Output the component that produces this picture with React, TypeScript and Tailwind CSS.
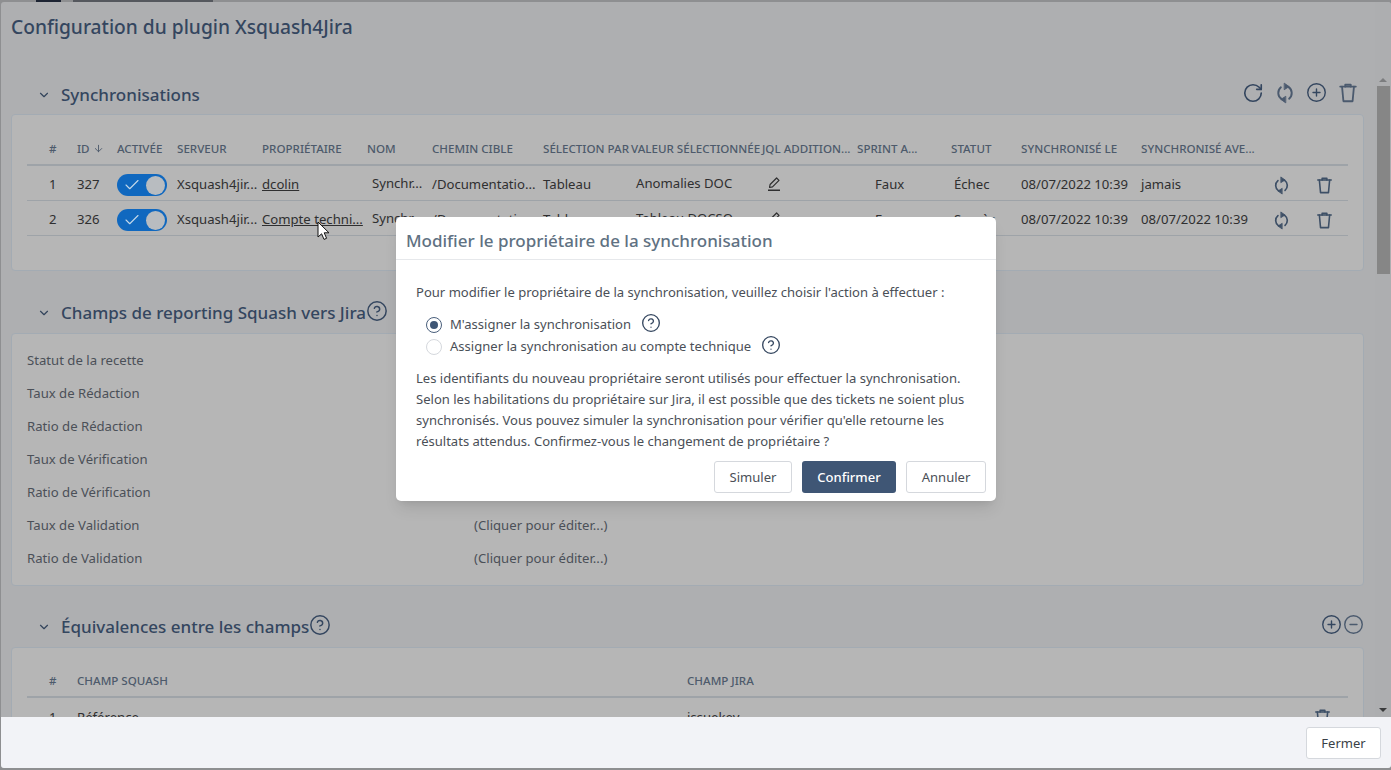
import React from 'react';
import { ChevronDown, ArrowDown, Check, RotateCw, CirclePlus, CircleMinus, CircleHelp } from 'lucide-react';

const FONT = { fontFamily: '"Noto Sans", sans-serif' };

const SyncIcon = ({ size = 20 }: { size?: number }) => (
  <svg width={size} height={size} viewBox="0 0 24 24" fill="none" stroke="currentColor" strokeWidth="2.1" strokeLinecap="round" strokeLinejoin="round">
    <path d="M16 5.6A8 8 0 0 1 16.5 18.2" />
    <path d="M8 18.4A8 8 0 0 1 7.5 5.8" />
    <path d="M11.5 1.5L16.5 5l-5 3.2z" fill="currentColor" strokeWidth="1" />
    <path d="M12.5 22.5L7.5 19l5-3.2z" fill="currentColor" strokeWidth="1" />
  </svg>
);

const BinIcon = ({ size = 20 }: { size?: number }) => (
  <svg width={size} height={size} viewBox="0 0 24 24" fill="none" stroke="currentColor" strokeWidth="2" strokeLinecap="round" strokeLinejoin="round">
    <path d="M3.5 5h17" />
    <path d="M9 5V3h6v2" />
    <path d="M5.5 5l1.5 16h10l1.5-16" />
  </svg>
);

const PenIcon = () => (
  <svg width="16" height="16" viewBox="0 0 16 16" fill="none" stroke="#2f2f30" strokeWidth="1.2" strokeLinejoin="round">
    <path d="M3.5 11.5l.6-3L10.6 2l2.4 2.4-6.5 6.5z" />
    <path d="M2 14.2h12" strokeWidth="1.5" />
  </svg>
);

const Toggle = () => (
  <div className="w-[50px] h-[22px] rounded-full bg-[#1068bf] flex items-center justify-between pl-[6px] pr-[2px]">
    <Check size={18} strokeWidth={1.5} className="text-[#c4d8ea]" />
    <div className="w-[19px] h-[19px] rounded-full bg-[#b8bcc0]" />
  </div>
);

const COLS = 'grid grid-cols-[50px_40px_60px_85px_105px_65px_111px_88px_131px_95px_94px_70px_120px_120px_44px_1fr]';

const Row = ({ n, id, owner, name, path, sel, value, status, last }: { n: string; id: string; owner: string; name: string; path: string; sel: string; value: string; status: string; last: string }) => (
  <div className={`${COLS} h-[35px] pt-[4px] items-center border-b border-[#9ea3a8] text-[13.15px] text-[#2f2f30]`}>
    <span className="pl-[22px]">{n}</span>
    <span>{id}</span>
    <Toggle />
    <span>Xsquash4jir...</span>
    <span className="underline">{owner}</span>
    <span className="pl-[5px] -mt-[2px]">{name}</span>
    <span>{path}</span>
    <span>{sel}</span>
    <span className="pl-[5px] -mt-[2px]">{value}</span>
    <span className="pl-[4px] -mt-[2px]"><PenIcon /></span>
    <span className="pl-[18px]">Faux</span>
    <span className="pl-[3px]">{status}</span>
    <span>08/07/2022 10:39</span>
    <span>{last}</span>
    <span className="pl-[11px] text-[#3d4f66]"><SyncIcon size={19} /></span>
    <span className="pl-[10px] text-[#3d4f66]"><BinIcon size={19} /></span>
  </div>
);

const SectionTitle = ({ title, help, first, children }: { title: string; help?: boolean; first?: boolean; children?: React.ReactNode }) => (
  <div className={`flex items-center h-[40px] pl-[36px] pr-[15px] ${first ? 'pt-[2px]' : ''}`}>
    <ChevronDown size={14} className="text-[#33445c]" />
    <span className="ml-[10px] text-[17px] font-medium text-[#34465f]">{title}</span>
    {help && <CircleHelp size={22} strokeWidth={1.6} className="text-[#34465f] -mt-[4px]" />}
    <div className="flex-1" />
    {children}
  </div>
);

const FIELDS = ['Statut de la recette', 'Taux de Rédaction', 'Ratio de Rédaction', 'Taux de Vérification', 'Ratio de Vérification', 'Taux de Validation', 'Ratio de Validation'];

const HEADERS = ['#', 'ID', 'ACTIVÉE', 'SERVEUR', 'PROPRIÉTAIRE', 'NOM', 'CHEMIN CIBLE', 'SÉLECTION PAR', 'VALEUR SÉLECTIONNÉE', 'JQL ADDITION...', 'SPRINT A...', 'STATUT', 'SYNCHRONISÉ LE', 'SYNCHRONISÉ AVE...'];

export default function App() {
  return (
    <div style={FONT} className="relative h-[770px] w-[1391px] overflow-hidden bg-[#8e8f91] pt-[2px] pb-[2px] pl-[1px]">
      {/* what is left of the page behind the drawer */}
      <div className="absolute left-0 top-0 flex h-[2px] w-full">
        <div className="ml-[36px] w-[25px] bg-[#1d2433]" />
        <div className="ml-[12px] w-[140px] bg-[#55585e]" />
      </div>

      <div className="relative flex h-full flex-col rounded-[3px] overflow-hidden bg-[#aeafb1]">
        <div className="flex flex-1 min-h-0">
          <div className="flex-1 min-w-0 overflow-hidden">
            <h1 className="pl-[10px] pt-[11px] h-[72px] text-[19.2px] font-medium text-[#34465f]">Configuration du plugin Xsquash4Jira</h1>

            <SectionTitle title="Synchronisations" first>
              <div className="-mt-[5px] mr-[1px] flex items-center gap-[10px] text-[#34465f]">
                <RotateCw size={22} strokeWidth={1.8} />
                <span className="text-[#4b5a6e]"><SyncIcon size={22} /></span>
                <CirclePlus size={21} strokeWidth={1.6} />
                <span className="text-[#4b5a6e]"><BinIcon size={22} /></span>
              </div>
            </SectionTitle>
            <div className="ml-[10px] mr-[11px] h-[157px] rounded-[4px] border border-[#a3abb3] bg-[#b6b6b6] px-[15px] pt-[18px]">
              <div className={`${COLS} h-[33px] items-center border-b-2 border-[#9ea3a8] text-[11.6px] font-medium text-[#4d5a6b] whitespace-nowrap`}>
                {HEADERS.map((h, i) => (
                  <span key={h} className={i === 0 ? 'pl-[22px]' : 'flex items-center gap-[3px]'}>
                    {h}
                    {h === 'ID' && <ArrowDown size={11} />}
                  </span>
                ))}
              </div>
              <Row n="1" id="327" owner="dcolin" name="Synchr..." path="/Documentatio..." sel="Tableau" value="Anomalies DOC" status="Échec" last="jamais" />
              <Row n="2" id="326" owner="Compte techni..." name="Synchr..." path="/Documentatio..." sel="Tableau" value="Tableau DOCSQ" status="Succès" last="08/07/2022 10:39" />
            </div>

            <div className="mt-[22px]">
              <SectionTitle title="Champs de reporting Squash vers Jira" help />
            </div>
            <div className="ml-[10px] mr-[11px] h-[253px] rounded-[4px] border border-[#a3abb3] bg-[#b6b6b6] px-[15px] pt-[10px]">
              {FIELDS.map(f => (
                <div key={f} className="flex h-[33px] items-center text-[13.15px] text-[#4b5058]">
                  <span className="w-[447px]">{f}</span>
                  <span>(Cliquer pour éditer...)</span>
                </div>
              ))}
            </div>

            <div className="mt-[21px]">
              <SectionTitle title="Équivalences entre les champs" help>
                <div className="-mr-[4px] -mt-[5px] flex items-center gap-[1px] text-[#34465f]">
                  <CirclePlus size={21} strokeWidth={1.6} />
                  <span className="text-[#4b5a6e]"><CircleMinus size={21} strokeWidth={1.6} /></span>
                </div>
              </SectionTitle>
            </div>
            <div className="ml-[10px] mr-[11px] h-[200px] rounded-[4px] border border-[#a3abb3] bg-[#b6b6b6] px-[15px] pt-[17px]">
              <div className="flex h-[33px] items-center border-b-2 border-[#9ea3a8] text-[11.6px] font-medium text-[#4d5a6b]">
                <span className="w-[50px] pl-[22px]">#</span>
                <span className="w-[610px]">CHAMP SQUASH</span>
                <span>CHAMP JIRA</span>
              </div>
              <div className="flex h-[35px] pt-[4px] items-center text-[13.15px] text-[#2f2f30]">
                <span className="w-[50px] pl-[22px]">1</span>
                <span className="w-[610px]">Référence</span>
                <span className="flex-1">issuekey</span>
                <span className="pr-[16px] text-[#3d4f66]"><BinIcon size={19} /></span>
              </div>
            </div>
          </div>

          <div className="w-[16px] shrink-0 pt-[76px] pb-[5px] flex flex-col items-center bg-[#adaeb0]">
            <div className="h-0 w-0 border-x-[4px] border-b-[4px] border-x-transparent border-b-[#7c7d7f]" />
            <div className="mt-[4px] h-[188px] w-[13px] bg-[#868686]" />
            <div className="flex-1" />
            <div className="h-0 w-0 border-x-[4px] border-t-[4px] border-x-transparent border-t-[#3a3b3c]" />
          </div>
        </div>

        <div className="flex h-[51px] shrink-0 items-center justify-end bg-[#f2f3f7] pr-[10px]">
          <button className="h-[32px] w-[75px] rounded-[3px] border border-[#d5d8dd] bg-white pt-[3px] text-[13px] text-[#3a3f47]">Fermer</button>
        </div>
      </div>

      {/* modal */}
      <div className="absolute left-[396px] top-[217px] w-[600px] h-[284px] rounded-[5px] bg-white shadow-lg text-[13.05px] text-[#4a4f57]">
        <div className="h-[43px] border-b border-[#e6e8eb] pl-[10px] pt-[11px] text-[17px] font-medium text-[#607182]">Modifier le propriétaire de la synchronisation</div>
        <div className="px-[20px] pt-[23px]">
          <p>Pour modifier le propriétaire de la synchronisation, veuillez choisir l'action à effectuer :</p>
          <div className="mt-[11px] pl-[10px]">
            <div className="flex h-[22px] items-center">
              <span className="flex h-[16px] w-[16px] items-center justify-center rounded-full border border-[#4a5f7c]"><span className="h-[8px] w-[8px] rounded-full bg-[#3f5675]" /></span>
              <span className="ml-[8px]">M'assigner la synchronisation</span>
              <CircleHelp size={20} strokeWidth={1.6} className="ml-[10px] -mt-[3px] text-[#34465f]" />
            </div>
            <div className="flex h-[22px] items-center">
              <span className="h-[16px] w-[16px] rounded-full border border-[#d5d8dd]" />
              <span className="ml-[8px]">Assigner la synchronisation au compte technique</span>
              <CircleHelp size={20} strokeWidth={1.6} className="ml-[10px] -mt-[3px] text-[#34465f]" />
            </div>
          </div>
          <p className="mt-[10px] leading-[21px]">Les identifiants du nouveau propriétaire seront utilisés pour effectuer la synchronisation. Selon les habilitations du propriétaire sur Jira, il est possible que des tickets ne soient plus synchronisés. Vous pouvez simuler la synchronisation pour vérifier qu'elle retourne les résultats attendus. Confirmez-vous le changement de propriétaire ?</p>
        </div>
        <div className="mt-[9px] flex justify-end gap-[10px] pr-[10px]">
          <button className="h-[32px] w-[78px] rounded-[3px] border border-[#d5d8dd] bg-white pt-[3px] text-[#4a4f57]">Simuler</button>
          <button className="h-[32px] w-[94px] rounded-[3px] bg-[#3f5675] pt-[3px] font-medium text-white">Confirmer</button>
          <button className="h-[32px] w-[80px] rounded-[3px] border border-[#d5d8dd] bg-white pt-[3px] text-[#4a4f57]">Annuler</button>
        </div>
      </div>

      {/* mouse cursor */}
      <svg className="absolute left-[317px] top-[221px]" width="14" height="20" viewBox="0 0 14 20">
        <path d="M1 1v15l3.6-3.2 2.4 5.6 2.6-1.1-2.4-5.5H12z" fill="#fff" stroke="#111" strokeWidth="1" />
      </svg>
    </div>
  );
}
